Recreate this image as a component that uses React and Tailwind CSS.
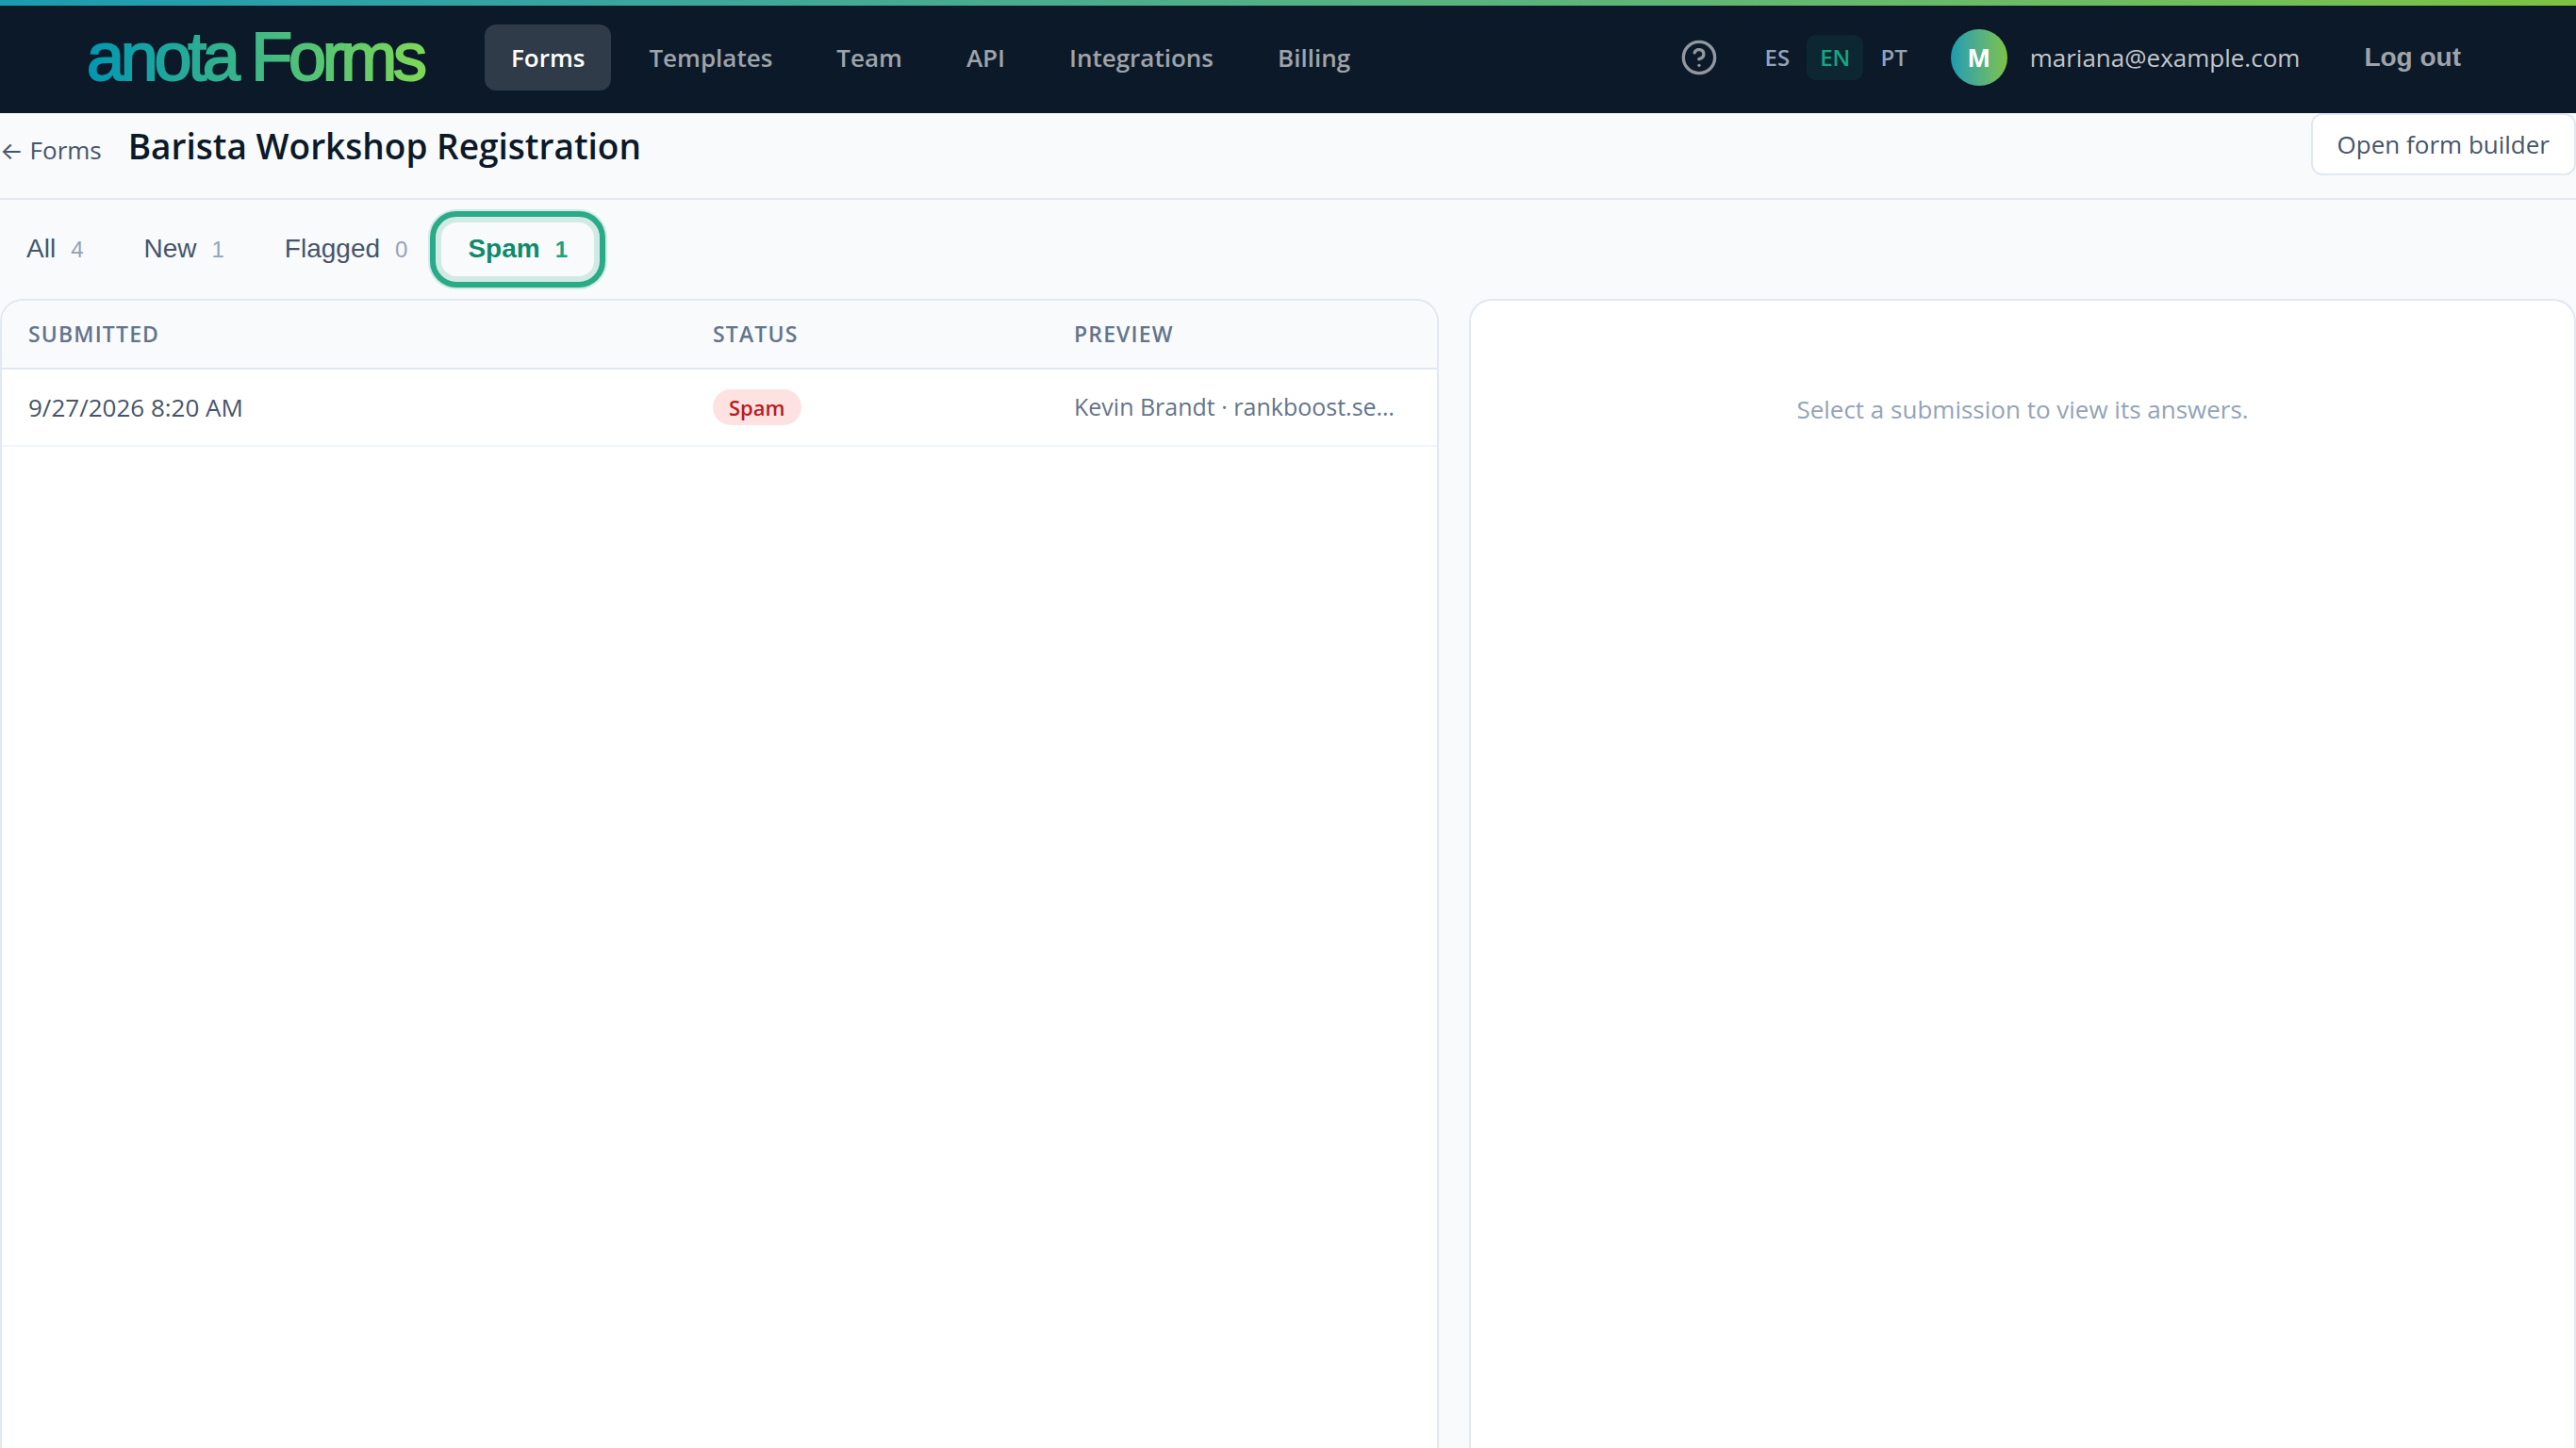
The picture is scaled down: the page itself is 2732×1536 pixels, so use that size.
import React, { useState } from 'react';

const NAV_ITEMS = ['Forms', 'Templates', 'Team', 'API', 'Integrations', 'Billing'];
const LANGUAGES = ['ES', 'EN', 'PT'];

const TABS = [
  { id: 'all', label: 'All', count: 4 },
  { id: 'new', label: 'New', count: 1 },
  { id: 'flagged', label: 'Flagged', count: 0 },
  { id: 'spam', label: 'Spam', count: 1 },
];

const SUBMISSIONS = [
  { id: 1, submitted: '9/27/2026 8:20 AM', status: 'Spam', preview: 'Kevin Brandt · rankboost.se…' },
];

const Logo = () => (
  <svg viewBox="0 0 380 90" className="h-[90px] w-[380px] shrink-0" role="img" aria-label="anota Forms">
    <defs>
      <linearGradient id="logoGradient" gradientUnits="userSpaceOnUse" x1="0" y1="0" x2="360" y2="0">
        <stop offset="0" stopColor="#0097b2" />
        <stop offset="1" stopColor="#7ed957" />
      </linearGradient>
    </defs>
    <text
      x="0"
      y="69"
      fill="url(#logoGradient)"
      stroke="url(#logoGradient)"
      strokeWidth="2"
      className="font-['Liberation_Sans',Arial,sans-serif] text-[72px] tracking-[-0.06em]"
    >
      anota Forms
    </text>
  </svg>
);

const HelpIcon = () => (
  <svg
    viewBox="0 0 24 24"
    className="size-10"
    fill="none"
    stroke="currentColor"
    strokeWidth="2"
    strokeLinecap="round"
    strokeLinejoin="round"
    aria-hidden="true"
  >
    <circle cx="12" cy="12" r="10" />
    <path d="M9.09 9a3 3 0 0 1 5.83 1c0 2-3 3-3 3" />
    <path d="M12 17h.01" />
  </svg>
);

const Header = () => {
  const [lang, setLang] = useState('EN');

  return (
    <header className="bg-[#0c1929]">
      <div className="h-1.5 bg-linear-to-r from-[#1a9bb0] to-[#7dc242]" />
      <div className="flex h-[114px] items-center justify-between pr-[94px] pb-1 pl-[92px]">
        <div className="flex items-center gap-[42px]">
          <a href="#home">
            <Logo />
          </a>
          <nav className="flex items-center gap-3">
            {NAV_ITEMS.map((item) => (
              <a
                key={item}
                href={`#${item.toLowerCase()}`}
                className={`rounded-xl px-7 py-4 text-[26px] leading-[38px] font-semibold ${item === 'Forms' ? 'bg-[#2f3b48] text-white' : 'text-[#9ea4aa]'}`}
              >
                {item}
              </a>
            ))}
          </nav>
        </div>

        <div className="flex items-center">
          <button type="button" aria-label="Help" className="mr-9 text-[#92989f]">
            <HelpIcon />
          </button>
          <div className="mr-8 flex items-center gap-1">
            {LANGUAGES.map((code) => (
              <button
                key={code}
                type="button"
                onClick={() => setLang(code)}
                className={`rounded-[10px] px-3.5 py-2 text-2xl font-semibold ${lang === code ? 'bg-[#0d2732] text-[#16a581]' : 'text-[#94a3b8]'}`}
              >
                {code}
              </button>
            ))}
          </div>
          <div className="flex items-center gap-6">
            <div className="flex size-[60px] items-center justify-center rounded-full bg-linear-to-r from-[#1a9bb0] to-[#7dc242] text-[26px] font-bold text-white">
              M
            </div>
            <span className="text-[26px] text-[#c3c7cb]">mariana@example.com</span>
          </div>
          <button
            type="button"
            className="ml-10 px-7 font-['Liberation_Sans',Arial,sans-serif] text-[28px] leading-8 font-bold text-[#9ea4aa]"
          >
            Log out
          </button>
        </div>
      </div>
    </header>
  );
};

const PageHeader = () => (
  <div className="flex items-start justify-between border-b-2 border-[#e2e8f0] pb-6">
    <div className="flex items-baseline gap-7 pt-1">
      <a href="#forms" className="text-[26px] text-[#475569]">
        <span className="font-['Inter',sans-serif]">←</span> Forms
      </a>
      <h1 className="text-[37px] leading-[62px] font-semibold text-[#0c1929]">Barista Workshop Registration</h1>
    </div>
    <button
      type="button"
      className="rounded-xl border-2 border-[#e2e8f0] bg-white px-[26px] py-3 text-[26px] leading-[38px] text-[#475569]"
    >
      Open form builder
    </button>
  </div>
);

const StatusTabs = ({ active, onChange }) => (
  <div className="flex gap-2 py-6 font-['Liberation_Sans',Arial,sans-serif]">
    {TABS.map((tab) => {
      const isActive = tab.id === active;
      return (
        <button
          key={tab.id}
          type="button"
          onClick={() => onChange(tab.id)}
          className={`flex items-baseline gap-4 rounded-2xl px-7 py-3 text-[28px] leading-8 ${
            isActive
              ? 'bg-[#f8fafc] font-bold text-[#0f8a6c] shadow-[0_0_0_14px_#d1ebe4] outline-6 outline-offset-6 outline-[#2baa88]'
              : 'text-[#475569]'
          }`}
        >
          {tab.label}
          <span className={`text-2xl ${isActive ? 'text-[#1aa37f]' : 'text-[#94a3b8]'}`}>{tab.count}</span>
        </button>
      );
    })}
  </div>
);

const SubmissionsTable = ({ rows }) => (
  <div className="overflow-hidden rounded-t-3xl border-2 border-b-0 border-[#e2e8f0] bg-white">
    <table className="w-full table-fixed border-collapse text-left">
      <thead className="bg-[#f8fafc] text-[23px] tracking-wider text-[#64748b] uppercase">
        <tr className="h-[72px] border-b-2 border-[#e2e8f0]">
          <th className="w-[726px] px-7 font-semibold">Submitted</th>
          <th className="w-[383px] px-7 font-semibold">Status</th>
          <th className="px-7 font-semibold">Preview</th>
        </tr>
      </thead>
      <tbody>
        {rows.map((row) => (
          <tr key={row.id} className="h-[82px] border-b-2 border-[#f1f5f9]">
            <td className="px-7 text-[26px] text-[#475569]">{row.submitted}</td>
            <td className="px-7">
              <span className="inline-block rounded-full bg-[#fee2e2] px-[17px] py-1 text-[22px] leading-[30px] font-semibold text-[#b91c1c]">
                {row.status}
              </span>
            </td>
            <td className="truncate px-7 text-[25px] text-[#64748b]">{row.preview}</td>
          </tr>
        ))}
      </tbody>
    </table>
  </div>
);

const App = () => {
  const [activeTab, setActiveTab] = useState('spam');

  return (
    <div className="flex h-screen flex-col overflow-hidden bg-[#f8fafc] font-['Open_Sans','Noto_Sans',sans-serif]">
      <Header />
      <main className="flex flex-1 flex-col">
        <PageHeader />
        <StatusTabs active={activeTab} onChange={setActiveTab} />
        <div className="grid flex-1 grid-cols-[1.3fr_1fr] gap-8">
          <SubmissionsTable rows={SUBMISSIONS} />
          <section className="rounded-t-3xl border-2 border-b-0 border-[#e2e8f0] bg-white px-8 py-24 text-center text-[26px] text-[#94a3b8]">
            Select a submission to view its answers.
          </section>
        </div>
      </main>
    </div>
  );
};

export default App;
